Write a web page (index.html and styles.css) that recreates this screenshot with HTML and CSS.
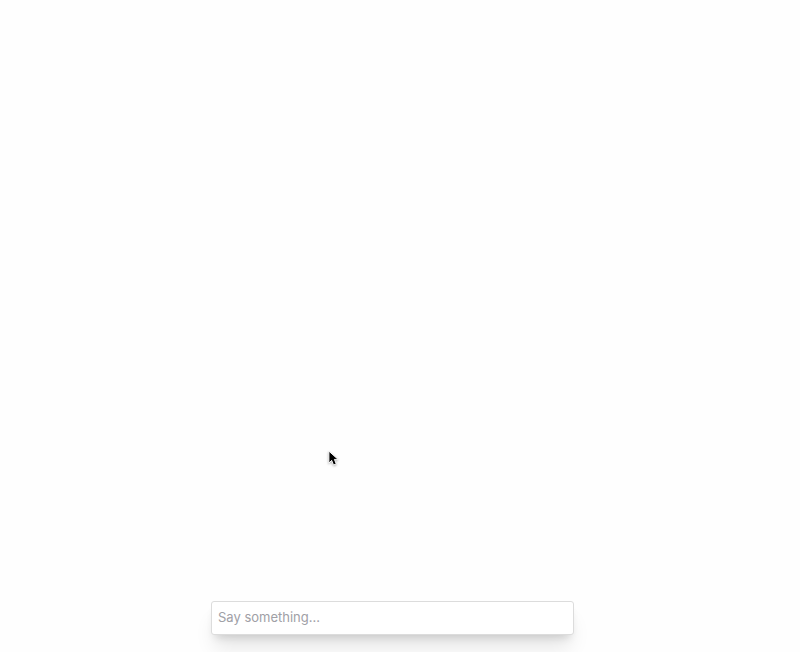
FILE: index.html
```
<!DOCTYPE html>
<html lang="en">
<head>
    <meta charset="UTF-8">
    <meta name="viewport" content="width=device-width, initial-scale=1.0">
    <title>Chat</title>
    <link rel="stylesheet" href="styles.css">
</head>
<body>
    <main class="chat">
        <div class="messages"></div>
        <form class="chat-form">
            <input class="chat-input" type="text" aria-label="Message" placeholder="Say something...">
        </form>
    </main>

    <svg class="pointer" width="11" height="17" viewBox="0 0 12 18" aria-hidden="true">
        <path d="M1 1v13l3-3 2 5 3-1-2-5h4z" fill="#000" stroke="#fff" stroke-width="1"/>
    </svg>
</body>
</html>
```

FILE: styles.css
```
* {
    box-sizing: border-box;
}
body {
    margin: 0;
    background-color: #fefefe;
    font-family: Inter, "Liberation Sans", sans-serif;
    overflow: hidden;
}
.chat {
    display: flex;
    flex-direction: column;
    min-height: 100vh;
    /* room for the scrollbar */
    padding-right: 15px;
}
.messages {
    flex: 1;
}
.chat-form {
    width: 100%;
    max-width: 363px;
    margin: 0 auto 17px;
}
.chat-input {
    display: block;
    width: 100%;
    height: 34px;
    padding: 0 6px 2px;
    border: 1px solid #dcdcdc;
    border-radius: 3px;
    background-color: #fff;
    font-family: inherit;
    font-size: 13px;
    box-shadow: 0 16px 20px -4px rgba(0, 0, 0, 0.1), 0 6px 8px -4px rgba(0, 0, 0, 0.15);
}
.chat-input::placeholder {
    color: #a0a0a6;
    opacity: 1;
}
.pointer {
    position: absolute;
    left: 328px;
    top: 450px;
    filter: drop-shadow(0 1px 1px rgba(0, 0, 0, 0.3));
}
```
